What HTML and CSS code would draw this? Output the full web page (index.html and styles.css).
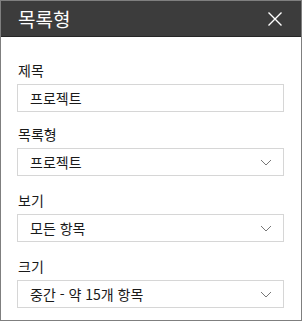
FILE: index.html
```html
<!DOCTYPE html>
<html lang="ko">
<head>
<meta charset="utf-8">
<link rel="stylesheet" href="styles.css">
</head>
<body>
<div class="panel">
  <div class="header">
    <span class="title">목록형</span>
    <svg class="close" width="14" height="14" viewBox="0 0 14 14"><path d="M0.5 0.5L13.5 13.5M13.5 0.5L0.5 13.5" stroke="#fff" stroke-width="1.4" fill="none"/></svg>
  </div>
  <div class="content">
    <div class="group first">
      <div class="label">제목</div>
      <div class="field">프로젝트</div>
    </div>
    <div class="group">
      <div class="label">목록형</div>
      <div class="field select">프로젝트<svg class="chev" width="12" height="7" viewBox="0 0 12 7"><path d="M1 1L6 6L11 1" stroke="#777" stroke-width="1" fill="none"/></svg></div>
    </div>
    <div class="group">
      <div class="label">보기</div>
      <div class="field select">모든 항목<svg class="chev" width="12" height="7" viewBox="0 0 12 7"><path d="M1 1L6 6L11 1" stroke="#777" stroke-width="1" fill="none"/></svg></div>
    </div>
    <div class="group">
      <div class="label">크기</div>
      <div class="field select">중간 - 약 15개 항목<svg class="chev" width="12" height="7" viewBox="0 0 12 7"><path d="M1 1L6 6L11 1" stroke="#777" stroke-width="1" fill="none"/></svg></div>
    </div>
  </div>
</div>
</body>
</html>
```
FILE: styles.css
```css
html, body { margin: 0; padding: 0; background: #fff; }
body { font-family: "Noto Sans CJK KR", "Noto Sans", sans-serif; color: #1a1a1a; }
.panel {
  width: 302px; height: 321px; box-sizing: border-box;
  border: 1px solid #7f7f7f; background: #fff;
}
.header {
  height: 35px; background: #3c3c3c; border-bottom: 1px solid #262626;
  display: flex; align-items: center; justify-content: space-between;
  padding: 0 19px 0 17px;
}
.title { color: #fff; font-size: 19px; line-height: 24px; }
.close { display: block; margin-top: 1px; }
.content { padding: 23px 17px 0 16px; display: flex; flex-direction: column; gap: 14px; }
.group { display: flex; flex-direction: column; gap: 4px; }
.group.first { margin-bottom: -2px; }
.label { font-size: 14px; line-height: 20px; color: #1a1a1a; padding-left: 1px; }
.field {
  height: 28px; box-sizing: border-box; border: 1px solid #d6d6d6;
  font-size: 14px; line-height: 26px; padding: 0 11px 0 12px;
  display: flex; align-items: center; justify-content: space-between; color: #1a1a1a;
}
.chev { display: block; }
```
